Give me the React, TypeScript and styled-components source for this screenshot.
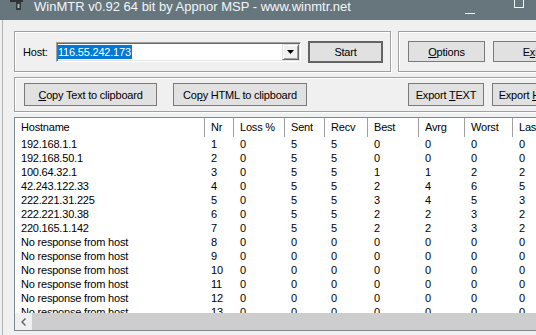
import React from 'react';
import styled, { createGlobalStyle } from 'styled-components';

const GlobalStyle = createGlobalStyle`
  html, body {
    margin: 0;
    padding: 0;
    background: #f0f0f0;
  }
  body {
    font-family: 'Liberation Sans', Arial, sans-serif;
    font-size: 11px;
    letter-spacing: -0.2px;
    color: #000;
  }
`;

type Hop = {
  host: string;
  nr: number;
  loss: number;
  sent: number;
  recv: number;
  best: number;
  avrg: number;
  worst: number;
  last: number;
};

const known: [string, number, number, number, number][] = [
  ['192.168.1.1', 0, 0, 0, 0],
  ['192.168.50.1', 0, 0, 0, 0],
  ['100.64.32.1', 1, 1, 2, 2],
  ['42.243.122.33', 2, 4, 6, 5],
  ['222.221.31.225', 3, 4, 5, 3],
  ['222.221.30.38', 2, 2, 3, 2],
  ['220.165.1.142', 2, 2, 3, 2],
];

const hops: Hop[] = [
  ...known.map(([host, best, avrg, worst, last], i) => ({
    host, nr: i + 1, loss: 0, sent: 5, recv: 5, best, avrg, worst, last,
  })),
  ...[8, 9, 10, 11, 12, 13].map(nr => ({
    host: 'No response from host', nr, loss: 0, sent: 0, recv: 0, best: 0, avrg: 0, worst: 0, last: 0,
  })),
];

const columns = ['Hostname', 'Nr', 'Loss %', 'Sent', 'Recv', 'Best', 'Avrg', 'Worst', 'Last'];
const colTemplate = '190px 29px 51px 40px 43px 51px 46px 48px 60px';

const Screen = styled.div`
  width: 536px;
  height: 335px;
  overflow: hidden;
  background: #f0f0f0;
  display: flex;
  flex-direction: column;
`;

const TitleBar = styled.div`
  flex: none;
  width: 585px;
  height: 20px;
  background: #67757d;
  display: flex;
  align-items: flex-start;
`;

const AppIcon = styled.svg`
  flex: none;
  margin-left: 10px;
`;

const TitleText = styled.div`
  flex: 1;
  margin: -1px 0 0 10px;
  font-size: 13px;
  line-height: 15px;
  letter-spacing: 0;
  color: #f2f5f7;
  white-space: nowrap;
`;

const CaptionButton = styled.svg`
  flex: none;
  width: 46px;
  height: 20px;
`;

const Client = styled.div`
  flex: 1;
  box-sizing: border-box;
  width: 583px;
  margin-left: 2px;
  border-left: 1px solid #b4b4b4;
  padding: 11px 7px 0 11px;
  display: flex;
  flex-direction: column;
  gap: 5px;
`;

const Row = styled.div`
  flex: none;
  display: flex;
  gap: 7px;
`;

const GroupBox = styled.div<{ $width?: number; $grow?: boolean; $height: number; $pad: number }>`
  box-sizing: border-box;
  flex: ${p => (p.$grow ? '1 1 0' : 'none')};
  width: ${p => (p.$width ? `${p.$width}px` : 'auto')};
  height: ${p => p.$height}px;
  border: 1px solid #a0a0a0;
  box-shadow: inset 1px 1px #fff, 1px 1px #fff;
  display: flex;
  align-items: center;
  padding: 0 ${p => p.$pad}px;
  gap: 8px;
`;

const HostLabel = styled.label`
  flex: none;
  width: 33px;
  margin-right: -8px;
`;

const Combo = styled.div`
  box-sizing: border-box;
  flex: none;
  width: 245px;
  height: 20px;
  background: #fff;
  border: 1px solid;
  border-color: #a0a0a0 #fff #fff #a0a0a0;
  box-shadow: inset 1px 1px #696969, inset -1px -1px #e3e3e3;
  padding: 1px;
  display: flex;
  align-items: center;
`;

const ComboText = styled.div`
  flex: 1;
  display: flex;
  align-items: center;
`;

const Selected = styled.span`
  background: #0078d7;
  color: #fff;
  line-height: 14px;
  padding-right: 1px;
`;

const DropButton = styled.div`
  box-sizing: border-box;
  flex: none;
  width: 17px;
  height: 16px;
  background: #f0f0f0;
  border: 1px solid;
  border-color: #e3e3e3 #696969 #696969 #e3e3e3;
  box-shadow: inset 1px 1px #fff, inset -1px -1px #a0a0a0;
  display: flex;
  align-items: center;
  justify-content: center;
`;

const Button = styled.div<{ $width: number; $height: number; $isDefault?: boolean; $push?: boolean }>`
  box-sizing: border-box;
  flex: none;
  width: ${p => p.$width}px;
  height: ${p => p.$height}px;
  margin-left: ${p => (p.$push ? 'auto' : '0')};
  background: #e1e1e1;
  border: ${p => (p.$isDefault ? '2px solid #646464' : '1px solid #7a7a7a')};
  display: flex;
  align-items: center;
  justify-content: center;
  white-space: nowrap;
`;

const ListView = styled.div`
  box-sizing: border-box;
  flex: none;
  height: 214px;
  border: 1px solid #828790;
  background: #fff;
  display: flex;
  flex-direction: column;
  overflow: hidden;
`;

const GridRow = styled.div<{ $height: number }>`
  flex: none;
  display: grid;
  grid-template-columns: ${colTemplate};
  height: ${p => p.$height}px;
  line-height: ${p => p.$height}px;
`;

const HeaderCell = styled.div`
  padding-left: 6px;
  border-right: 1px solid #a0a0a0;
  white-space: nowrap;
  overflow: hidden;
`;

const Cell = styled.div`
  padding-left: 6px;
  white-space: nowrap;
  overflow: hidden;
`;

const Rows = styled.div`
  flex: 1;
  overflow: hidden;
`;

const ScrollBar = styled.div`
  flex: none;
  height: 17px;
  display: flex;
  background: #f0f0f0;
`;

const ScrollArrow = styled.div`
  flex: none;
  width: 17px;
  display: flex;
  align-items: center;
  justify-content: center;
`;

const ScrollThumb = styled.div`
  flex: 1;
  background: #cdcdcd;
`;

export default function App() {
  return (
    <Screen>
      <GlobalStyle />
      <TitleBar>
        <AppIcon width="14" height="10" viewBox="0 0 14 10">
          <rect x="0" y="0" width="13" height="2" fill="#2e3234" />
          <rect x="6" y="2" width="5" height="8" fill="#33383a" />
          <rect x="7.5" y="4" width="2" height="4" fill="#a9b3b8" />
        </AppIcon>
        <TitleText>WinMTR v0.92 64 bit by Appnor MSP - www.winmtr.net</TitleText>
        <CaptionButton viewBox="0 0 46 20">
          <rect x="18" y="13" width="10" height="1" fill="#f2f5f7" />
        </CaptionButton>
        <CaptionButton viewBox="0 0 46 20">
          <rect x="21.5" y="-2.5" width="9" height="10" fill="none" stroke="#f2f5f7" />
        </CaptionButton>
        <CaptionButton viewBox="0 0 46 20">
          <path d="M18 -2 L28 8 M28 -2 L18 8" stroke="#f2f5f7" />
        </CaptionButton>
      </TitleBar>

      <Client>
        <Row>
          <GroupBox $width={377} $height={41} $pad={8}>
            <HostLabel>Host:</HostLabel>
            <Combo>
              <ComboText>
                <Selected>116.55.242.173</Selected>
              </ComboText>
              <DropButton>
                <svg width="7" height="4" viewBox="0 0 7 4">
                  <path d="M0 0 H7 L3.5 4 Z" fill="#000" />
                </svg>
              </DropButton>
            </Combo>
            <Button $width={75} $height={22} $isDefault style={{ marginLeft: -1 }}>Start</Button>
          </GroupBox>
          <GroupBox $grow $height={41} $pad={9}>
            <Button $width={77} $height={21}><span><u>O</u>ptions</span></Button>
            <Button $width={77} $height={21}><span>E<u>x</u>it</span></Button>
          </GroupBox>
        </Row>

        <GroupBox $height={35} $pad={9}>
          <Button $width={133} $height={23}><span><u>C</u>opy Text to clipboard</span></Button>
          <Button $width={134} $height={23} style={{ marginLeft: 8 }}><span>Co<u>p</u>y HTML to clipboard</span></Button>
          <Button $width={76} $height={23} $push><span>Export <u>T</u>EXT</span></Button>
          <Button $width={76} $height={23}><span>Export <u>H</u>TML</span></Button>
        </GroupBox>

        <ListView>
          <GridRow $height={19}>
            {columns.map(c => (
              <HeaderCell key={c}>{c}</HeaderCell>
            ))}
          </GridRow>
          <Rows>
            {hops.map(h => (
              <GridRow key={h.nr} $height={14}>
                <Cell>{h.host}</Cell>
                <Cell>{h.nr}</Cell>
                <Cell>{h.loss}</Cell>
                <Cell>{h.sent}</Cell>
                <Cell>{h.recv}</Cell>
                <Cell>{h.best}</Cell>
                <Cell>{h.avrg}</Cell>
                <Cell>{h.worst}</Cell>
                <Cell>{h.last}</Cell>
              </GridRow>
            ))}
          </Rows>
          <ScrollBar>
            <ScrollArrow>
              <svg width="5" height="8" viewBox="0 0 5 8">
                <path d="M4.5 0.5 L1 4 L4.5 7.5" fill="none" stroke="#606060" strokeWidth="1.4" />
              </svg>
            </ScrollArrow>
            <ScrollThumb />
          </ScrollBar>
        </ListView>
      </Client>
    </Screen>
  );
}
